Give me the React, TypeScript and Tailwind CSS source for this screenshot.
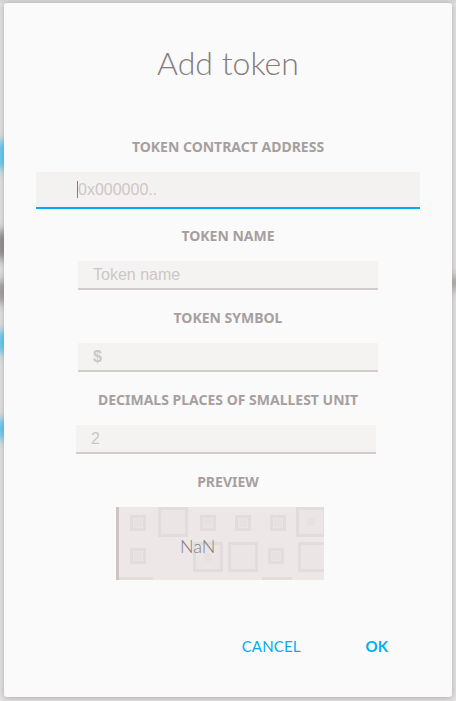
import React from "react";

const labelCls =
  "text-center text-[14px] leading-4 font-bold text-[#a79f9f] uppercase";

const Field = ({
  text,
  bold,
  shift,
}: {
  text: string;
  bold?: boolean;
  shift?: boolean;
}) => (
  <div className={`flex justify-center ${shift ? "pr-[4px]" : ""}`}>
    <div className="w-[300px] h-[29px] bg-[#f5f3f2] border-b-2 border-[#d4cccc] flex items-center pl-[15px]">
      <span
        className={`font-['Liberation_Sans',Arial,sans-serif] text-[16px] text-[#cec6c6] ${
          bold ? "font-bold" : ""
        }`}
      >
        {text}
      </span>
    </div>
  </div>
);

const Preview = () => {
  // identicon-like backdrop of squares
  const cells = [
    { x: 11, y: 8, s: 16, inner: true },
    { x: 39, y: 0, s: 30, inner: false },
    { x: 81, y: 8, s: 16, inner: true },
    { x: 116, y: 8, s: 16, inner: true },
    { x: 151, y: 8, s: 16, inner: true },
    { x: 177, y: 0, s: 30, inner: true },
    { x: 11, y: 41, s: 16, inner: true },
    { x: 74, y: 35, s: 30, inner: true },
    { x: 109, y: 35, s: 30, inner: false },
    { x: 149, y: 41, s: 16, inner: true },
    { x: 179, y: 35, s: 30, inner: false },
  ];
  return (
    <div className="flex justify-center pr-[16px]">
      <div className="relative w-[208px] h-[73px] bg-[#ede7e7] border-l-[3px] border-[#cfc4c4] overflow-hidden">
        <svg width="205" height="73" className="absolute inset-0">
          {cells.map((c, i) => (
            <g key={i}>
              <rect
                x={c.x + 1.5}
                y={c.y + 1.5}
                width={c.s - 3}
                height={c.s - 3}
                fill="#ebe5e5"
                stroke="#e3dcdc"
                strokeWidth="3"
              />
              {c.inner && (
                <rect
                  x={c.x + c.s / 2 - 4}
                  y={c.y + c.s / 2 - 4}
                  width="8"
                  height="8"
                  fill="#e8e1e1"
                />
              )}
            </g>
          ))}
          <rect x="0" y="70" width="34" height="3" fill="#e3dcdc" />
          <rect x="143" y="70" width="30" height="3" fill="#e3dcdc" />
        </svg>
        <div className="relative pl-[61px] pt-[29px] font-['Lato',sans-serif] font-light text-[18px] leading-5 text-[#857c7c]">
          NaN
        </div>
      </div>
    </div>
  );
};

export default function App() {
  return (
    <div className="relative h-[701px] w-[456px] overflow-hidden bg-[#e4e2e2] pt-[3px] pl-[4px]">
      {/* blurred page behind the dialog */}
      <div className="absolute left-[-6px] top-[140px] w-[14px] h-[30px] rounded-full bg-[#5cc8f5] blur-[4px]" />
      <div className="absolute left-[-6px] top-[230px] w-[14px] h-[30px] rounded-full bg-[#8f8a8a] blur-[4px]" />
      <div className="absolute left-[-6px] top-[280px] w-[14px] h-[24px] rounded-full bg-[#a09b9b] blur-[4px]" />
      <div className="absolute left-[-6px] top-[330px] w-[14px] h-[24px] rounded-full bg-[#5cc8f5] blur-[4px]" />
      <div className="absolute left-[-6px] top-[418px] w-[14px] h-[22px] rounded-full bg-[#5cc8f5] blur-[4px]" />
      <div className="absolute right-[-6px] top-[275px] w-[12px] h-[16px] rounded-full bg-[#a6a1a1] blur-[4px]" />
      <div className="absolute left-0 top-0 w-full h-[3px] bg-[#d9d6d6]" />

      <div className="relative w-[448px] h-[694px] rounded-[3px] bg-[#fafafa] shadow-[0_1px_6px_rgba(0,0,0,0.25)] flex flex-col">
        <h1 className="pt-[40px] h-[82px] text-center font-['Lato',sans-serif] font-light text-[32px] leading-[40px] text-[#857b7b]">
          Add token
        </h1>

        <div className="mt-[54px] flex flex-col">
          <div className={labelCls}>Token contract address</div>
          <div className="mt-[17px] flex justify-center">
            <div className="w-[384px] h-[37px] bg-[#f4f2f1] border-b-2 border-[#03a9f4] flex items-center pl-[41px]">
              <span className="w-px h-[17px] bg-[#1a9ee6]" />
              <span className="font-['Liberation_Sans',Arial,sans-serif] text-[16px] text-[#cec6c6]">
                0x000000..
              </span>
            </div>
          </div>

          <div className={`${labelCls} mt-[19px]`}>Token name</div>
          <div className="mt-[17px]">
            <Field text="Token name" />
          </div>

          <div className={`${labelCls} mt-[20px]`}>Token symbol</div>
          <div className="mt-[17px]">
            <Field text="$" bold />
          </div>

          <div className={`${labelCls} mt-[20px]`}>
            Decimals places of smallest unit
          </div>
          <div className="mt-[17px]">
            <Field text="2" shift />
          </div>

          <div className={`${labelCls} mt-[20px]`}>Preview</div>
          <div className="mt-[17px]">
            <Preview />
          </div>
        </div>

        <div className="mt-[56px] flex justify-end items-center pr-[64px] gap-[65px] font-['Lato',sans-serif] text-[15px] leading-5 text-[#00aef0]">
          <button className="tracking-[0.01em]">CANCEL</button>
          <button className="font-bold">OK</button>
        </div>
      </div>
    </div>
  );
}
